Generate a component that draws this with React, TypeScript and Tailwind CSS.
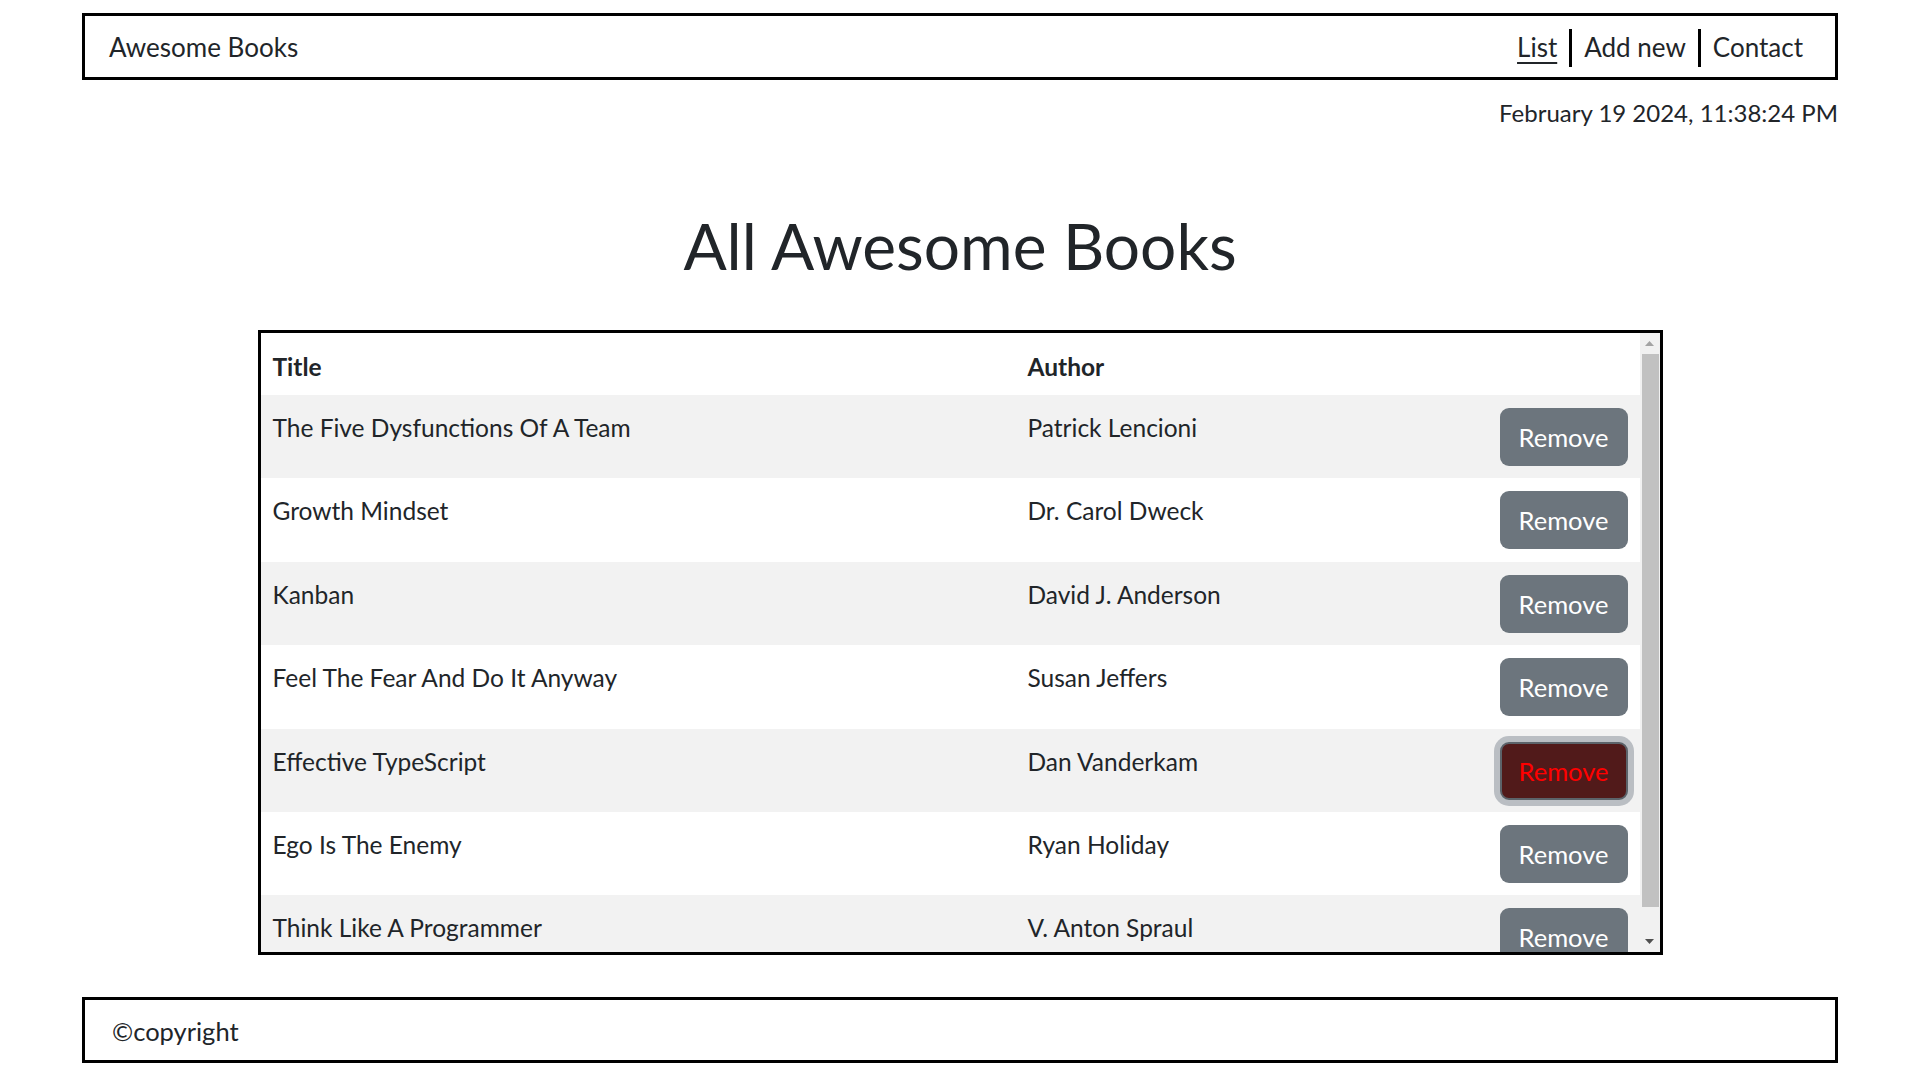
const books = [
  { title: 'The Five Dysfunctions Of A Team', author: 'Patrick Lencioni' },
  { title: 'Growth Mindset', author: 'Dr. Carol Dweck' },
  { title: 'Kanban', author: 'David J. Anderson' },
  { title: 'Feel The Fear And Do It Anyway', author: 'Susan Jeffers' },
  { title: 'Effective TypeScript', author: 'Dan Vanderkam', active: true },
  { title: 'Ego Is The Enemy', author: 'Ryan Holiday' },
  { title: 'Think Like A Programmer', author: 'V. Anton Spraul' },
]

function Scrollbar() {
  return (
    <div className="flex w-[20px] shrink-0 flex-col bg-[#f1f1f1]">
      <div className="flex h-[21px] items-center justify-center">
        <svg width="9" height="5" viewBox="0 0 9 5">
          <polygon points="0,5 9,5 4.5,0" fill="#a3a3a3" />
        </svg>
      </div>
      <div className="ml-[2px] mr-[1px] h-[553px] bg-[#c1c1c1]"></div>
      <div className="flex-1"></div>
      <div className="flex h-[21px] items-center justify-center">
        <svg width="9" height="5" viewBox="0 0 9 5">
          <polygon points="0,0 9,0 4.5,5" fill="#505050" />
        </svg>
      </div>
    </div>
  )
}

export default function App() {
  return (
    <div className="min-h-screen bg-white font-['Lato',sans-serif] text-[#212529]">
      <div className="px-[82px] pt-[13px]">
        {/* top bar */}
        <header className="flex h-[67px] items-center justify-between border-[3px] border-black pl-[24px] pr-[20px] pt-[2px]">
          <span className="text-[26px]">Awesome Books</span>
          <nav className="flex items-center text-[26px]">
            <a href="#" className="px-[12px] underline underline-offset-[5px]">List</a>
            <span className="h-[38px] w-[3px] bg-black"></span>
            <a href="#" className="px-[12px]">Add new</a>
            <span className="h-[38px] w-[3px] bg-black"></span>
            <a href="#" className="px-[12px]">Contact</a>
          </nav>
        </header>
        <p className="mt-[15px] text-right text-[24px] leading-[36px]">February 19 2024, 11:38:24 PM</p>
      </div>

      <main className="flex flex-col items-center">
        <h1 className="mt-[83px] text-[64px] leading-none">All Awesome Books</h1>

        <div className="mt-[52px] flex h-[625px] w-[1405px] border-[3px] border-black">
          <div className="flex-1 overflow-hidden text-[24.5px] leading-[36px]">
            <div className="grid h-[62px] grid-cols-[755px_472px_1fr] pt-[16px] font-bold">
              <div className="pl-[12px]">Title</div>
              <div className="pl-[12px]">Author</div>
              <div></div>
            </div>
            {books.map((b, i) => (
              <div
                key={b.title}
                className={`grid h-[83.4px] shrink-0 grid-cols-[755px_472px_1fr] ${i % 2 === 0 ? 'bg-[#f2f2f2]' : 'bg-white'}`}
              >
                <div className="pl-[12px] pt-[15px]">{b.title}</div>
                <div className="pl-[12px] pt-[15px]">{b.author}</div>
                <div className="flex justify-end pr-[12px] pt-[13px]">
                  {b.active ? (
                    <button className="h-[58px] w-[128px] rounded-[9px] border-[2px] border-[#5c636a] bg-[#511a1a] text-[25.5px] text-[#ff0000] shadow-[0_0_0_6px_#babec3]">
                      Remove
                    </button>
                  ) : (
                    <button className="h-[58px] w-[128px] rounded-[9px] bg-[#6c757d] text-[25.5px] text-white">Remove</button>
                  )}
                </div>
              </div>
            ))}
          </div>
          <Scrollbar />
        </div>
      </main>

      <footer className="px-[82px]">
        <div className="mt-[42px] flex h-[66px] items-center border-[3px] border-black pl-[27px] pt-[3px] text-[25.5px]">
          ©copyright
        </div>
      </footer>
    </div>
  )
}
